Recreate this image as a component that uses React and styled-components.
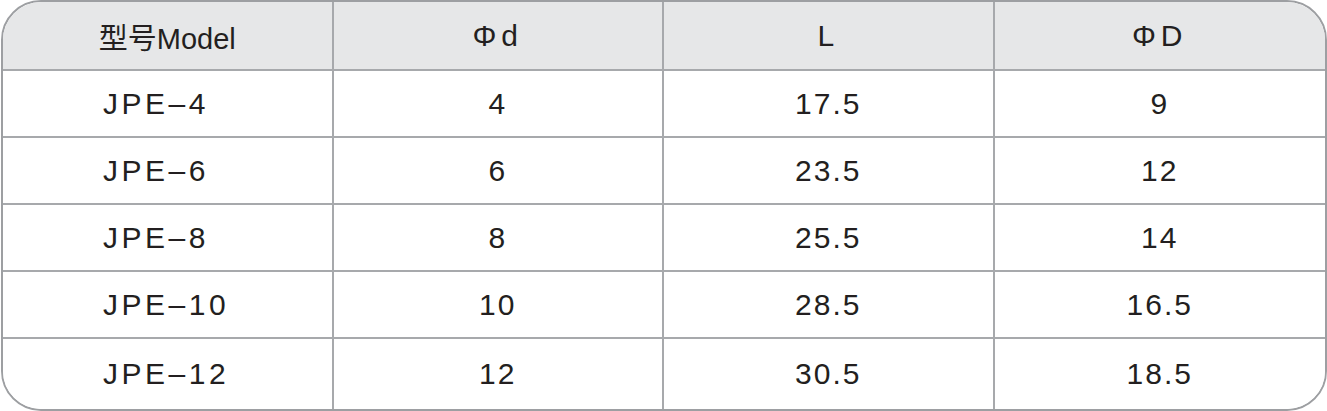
import React from 'react';
import styled, { createGlobalStyle } from 'styled-components';

const GlobalStyle = createGlobalStyle`
	html, body {
		margin: 0;
		padding: 0;
		background: #ffffff;
	}
	body {
		font-family: "Liberation Sans", "Noto Sans CJK SC", sans-serif;
	}
`;

const Frame = styled.div`
	box-sizing: border-box;
	width: 1326px;
	height: 411px;
	margin-left: 1px;
	border: 2px solid #9d9fa2;
	border-radius: 40px;
	overflow: hidden;
	display: grid;
	grid-template-columns: repeat(4, 1fr);
	grid-template-rows: 69px repeat(4, 67px) 1fr;
	color: #231f20;
`;

const Cell = styled.div`
	box-sizing: border-box;
	display: flex;
	align-items: center;
	justify-content: ${(p) => (p.$left ? 'flex-start' : 'center')};
	padding-left: ${(p) => (p.$left ? '100px' : '0')};
	font-size: ${(p) => (p.$tight ? '29px' : '30px')};
	letter-spacing: ${(p) => p.$spacing || '2px'};
	background: ${(p) => (p.$head ? '#e6e7e8' : '#ffffff')};
	border-right: ${(p) => (p.$last ? 'none' : '2px solid #a7a9ac')};
	border-bottom: ${(p) => (p.$bottom ? 'none' : '2px solid #a7a9ac')};
`;

const head = ['型号Model', 'Φd', 'L', 'ΦD'];

const rows = [
	['JPE–4', '4', '17.5', '9'],
	['JPE–6', '6', '23.5', '12'],
	['JPE–8', '8', '25.5', '14'],
	['JPE–10', '10', '28.5', '16.5'],
	['JPE–12', '12', '30.5', '18.5'],
];

export default function App() {
	return (
		<>
			<GlobalStyle />
			<Frame>
				{head.map((h, i) => (
					<Cell
						key={h}
						$head
						$tight={i === 0}
						$spacing={i === 0 ? '0' : '5px'}
						$last={i === 3}
					>
						{h}
					</Cell>
				))}
				{rows.map((r, ri) =>
					r.map((v, ci) => (
						<Cell
							key={ri + '-' + ci}
							$left={ci === 0}
							$spacing={ci === 0 ? '3.5px' : '2px'}
							$last={ci === 3}
							$bottom={ri === rows.length - 1}
						>
							{v}
						</Cell>
					))
				)}
			</Frame>
		</>
	);
}
